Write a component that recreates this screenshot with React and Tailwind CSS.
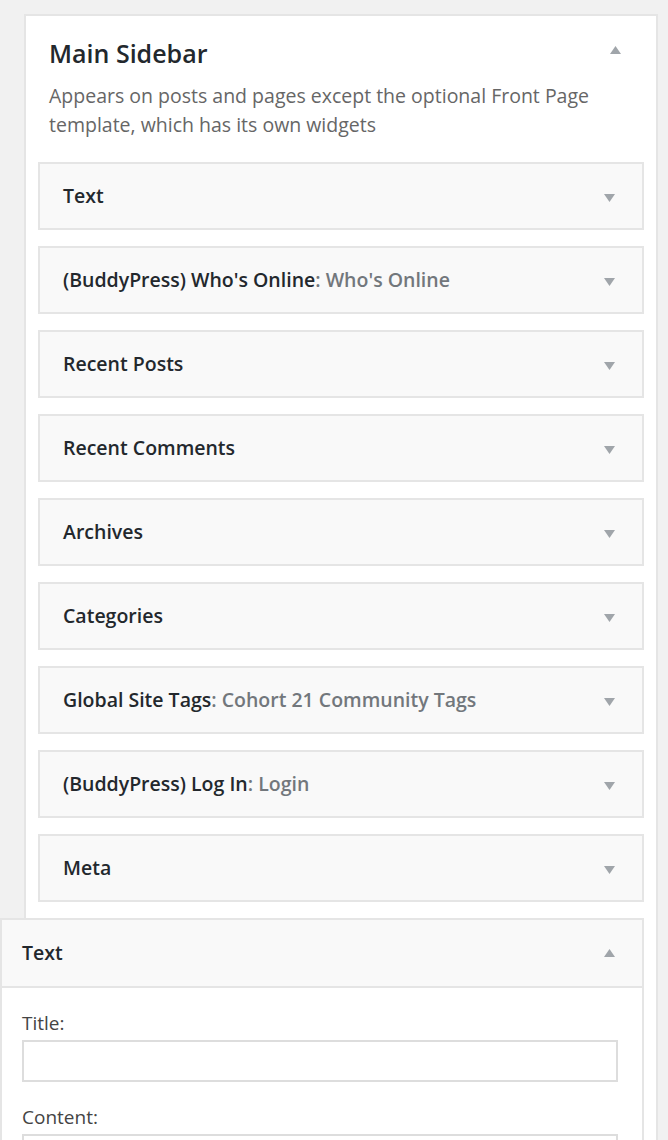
import React from 'react';

const widgets = [
  { title: 'Text' },
  { title: "(BuddyPress) Who's Online", sub: "Who's Online" },
  { title: 'Recent Posts' },
  { title: 'Recent Comments' },
  { title: 'Archives' },
  { title: 'Categories' },
  { title: 'Global Site Tags', sub: 'Cohort 21 Community Tags' },
  { title: '(BuddyPress) Log In', sub: 'Login' },
  { title: 'Meta' },
];

function Arrow({ up = false }) {
  return (
    <svg width="11" height="8" viewBox="0 0 11 8" className="shrink-0">
      <path d={up ? 'M5.5 0 L11 8 L0 8 Z' : 'M0 0 L11 0 L5.5 8 Z'} fill="#a0a5aa" />
    </svg>
  );
}

function WidgetRow({ title, sub }) {
  return (
    <div className="h-[68px] border-2 border-[#e5e5e5] bg-[#f9f9f9] flex items-center justify-between pl-[23px] pr-[27px]">
      <span className="text-[19.5px] font-semibold text-[#23282d]">
        {title}
        {sub && <span className="text-[#72777c]">: {sub}</span>}
      </span>
      <div className="mt-[4px]">
        <Arrow />
      </div>
    </div>
  );
}

export default function App() {
  return (
    <div className="min-h-[1140px] bg-[#f1f1f1] overflow-hidden pt-[14px] font-['Open_Sans',sans-serif]">
      <div className="ml-[24px] w-[634px] bg-white border-2 border-[#e5e5e5] border-b-0">
        {/* Sidebar header */}
        <div className="px-[23px] pt-[20px]">
          <div className="flex items-center justify-between">
            <h2 className="text-[25px] font-semibold text-[#23282d] leading-[34px]">Main Sidebar</h2>
            <div className="mr-[12px] -mt-[6px]">
              <Arrow up />
            </div>
          </div>
          <p className="mt-[11px] text-[19.5px] leading-[29px] text-[#666]">
            Appears on posts and pages except the optional Front Page template, which has its own widgets
          </p>
        </div>

        {/* Widget list */}
        <div className="px-[12px] pt-[23px] flex flex-col gap-[16px] pb-[16px]">
          {widgets.map((w, i) => (
            <WidgetRow key={i} title={w.title} sub={w.sub} />
          ))}
        </div>

        {/* Open widget being dragged */}
        <div className="-ml-[26px] w-[644px] bg-white border-2 border-[#e5e5e5] border-b-0">
          <div className="h-[68px] bg-[#f9f9f9] border-b-2 border-[#e5e5e5] flex items-center justify-between pl-[20px] pr-[27px]">
            <span className="text-[19.5px] font-semibold text-[#23282d]">Text</span>
            <Arrow up />
          </div>
          <div className="px-[20px] pt-[22px] pb-[20px]">
            <label className="block text-[19px] text-[#444] leading-[26px]">Title:</label>
            <input
              type="text"
              className="mt-[4px] block w-[596px] h-[42px] border-2 border-[#ddd] bg-white outline-none"
            />
            <label className="block mt-[22px] text-[19px] text-[#444] leading-[26px]">Content:</label>
            <textarea className="mt-[4px] block w-[596px] h-[200px] border-2 border-[#ddd] bg-white resize-none outline-none" />
          </div>
        </div>
      </div>
    </div>
  );
}
